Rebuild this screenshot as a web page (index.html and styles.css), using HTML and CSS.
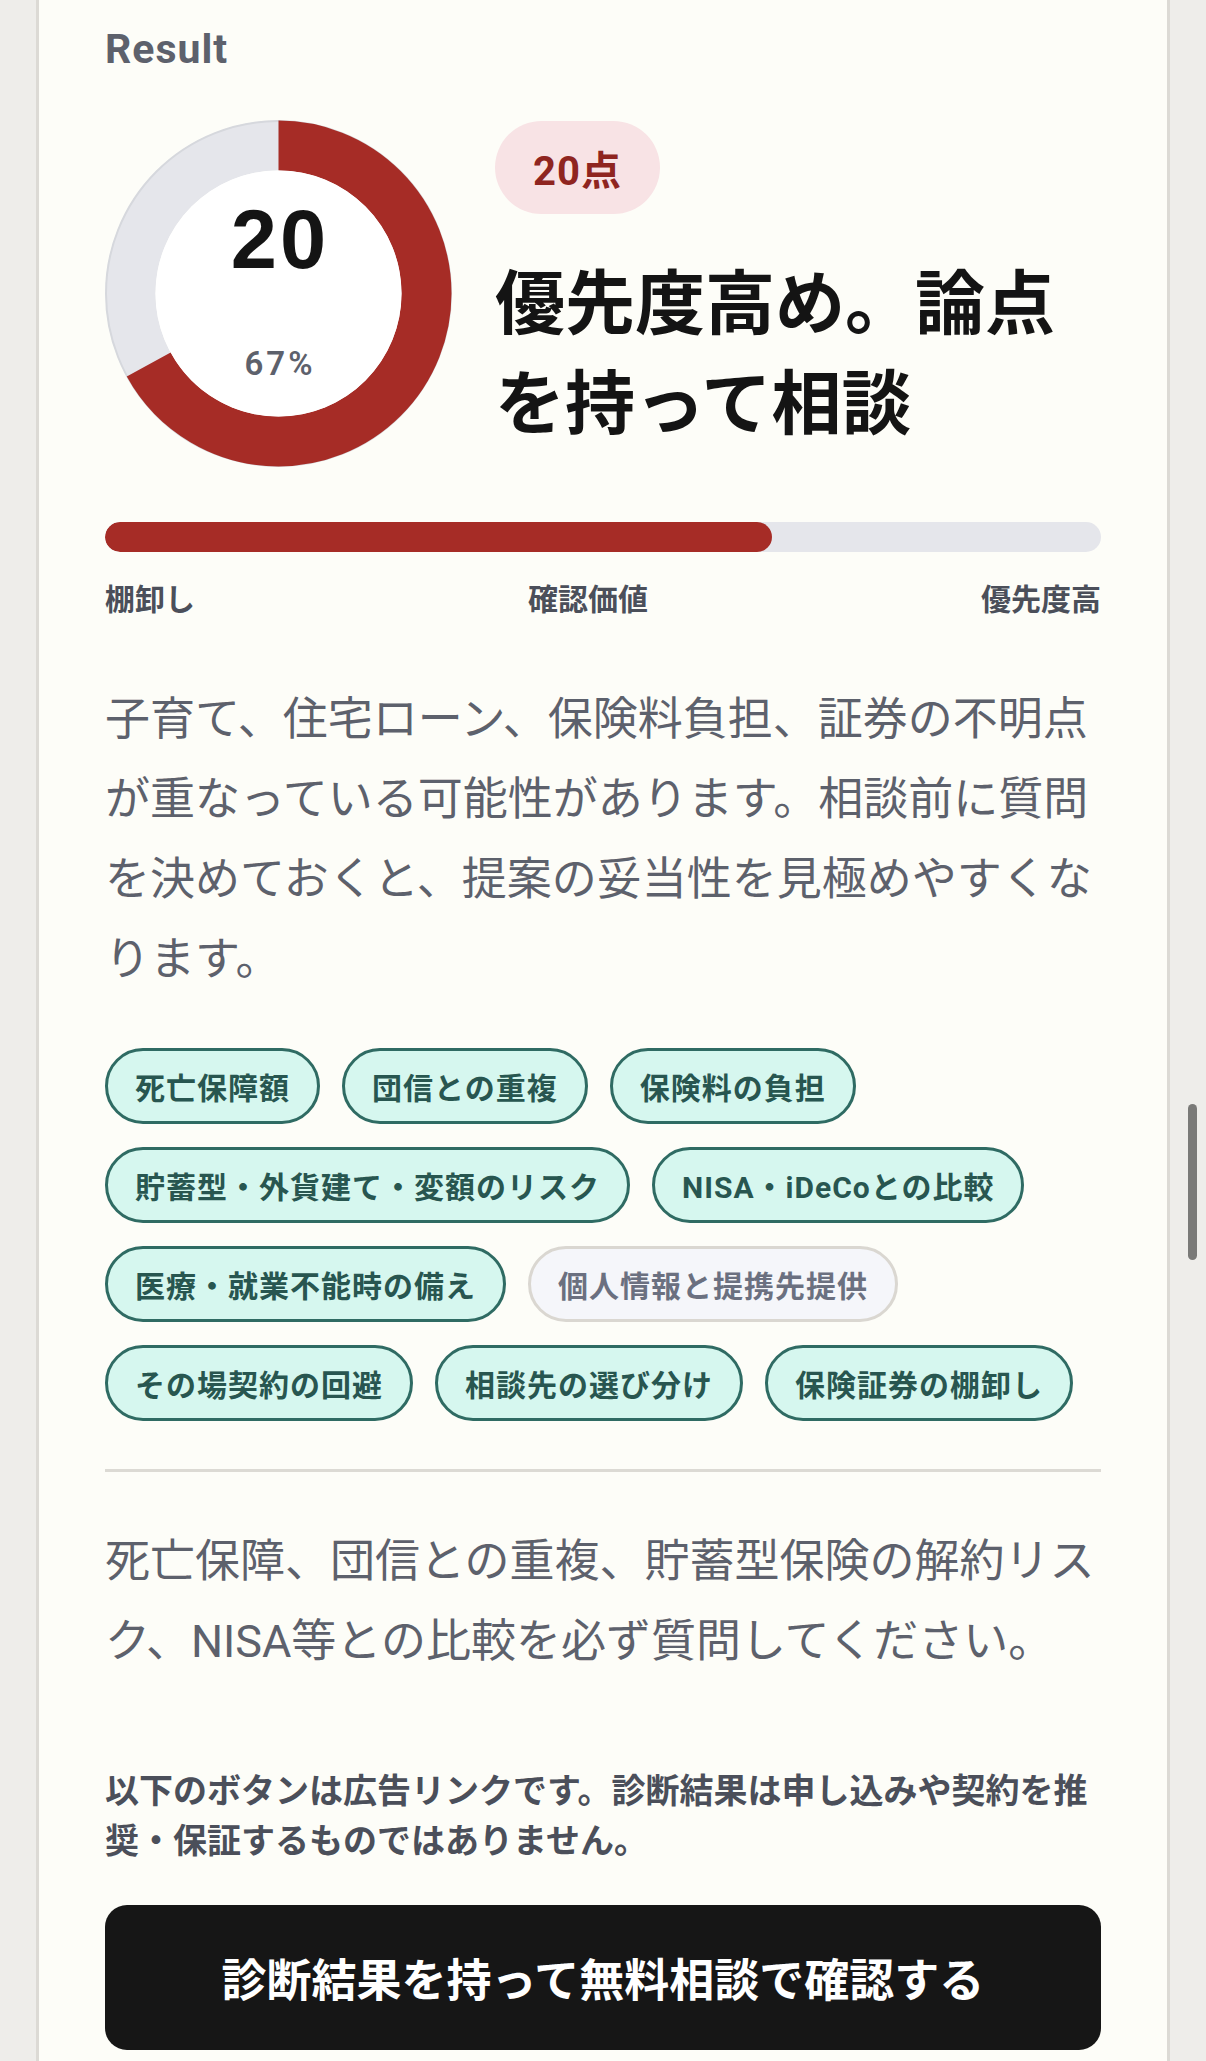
FILE: index.html
```html
<!DOCTYPE html>
<html lang="ja">
<head>
  <meta charset="UTF-8" />
  <meta name="viewport" content="width=device-width, initial-scale=1.0"/>
  <title>診断結果</title>
  <link rel="stylesheet" href="styles.css">
</head>
<body>

  <div class="page">
    <div class="card">
      <div class="result-label">Result</div>

      <!-- Score -->
      <div class="hero">
        <svg class="donut" width="347" height="347" viewBox="0 0 347 347">
          <circle cx="173.5" cy="173.5" r="148" fill="none" stroke="#e5e6eb" stroke-width="50"/>
          <circle cx="173.5" cy="173.5" r="172.5" fill="none" stroke="#d6d8dd" stroke-width="2"/>
          <circle cx="173.5" cy="173.5" r="148" fill="none" stroke="#a62c26" stroke-width="50"
                  stroke-dasharray="623 930" transform="rotate(-90 173.5 173.5)"/>
          <circle cx="173.5" cy="173.5" r="123" fill="#ffffff"/>
          <text class="donut-score" x="175" y="148" text-anchor="middle">20</text>
          <text class="donut-pct" x="175" y="255" text-anchor="middle">67%</text>
        </svg>

        <div class="hero-body">
          <span class="score-badge">20点</span>
          <h1 class="hero-title">優先度高め。論点を持って相談</h1>
        </div>
      </div>

      <div class="meter">
        <div class="meter-fill" style="width: 67%;"></div>
      </div>
      <div class="meter-labels">
        <span>棚卸し</span>
        <span>確認価値</span>
        <span>優先度高</span>
      </div>

      <p class="summary">子育て、住宅ローン、保険料負担、証券の不明点が重なっている可能性があります。相談前に質問を決めておくと、提案の妥当性を見極めやすくなります。</p>

      <!-- Topics -->
      <div class="tags">
        <span class="tag">死亡保障額</span>
        <span class="tag">団信との重複</span>
        <span class="tag">保険料の負担</span>
        <span class="tag">貯蓄型・外貨建て・変額のリスク</span>
        <span class="tag">NISA・iDeCoとの比較</span>
        <span class="tag">医療・就業不能時の備え</span>
        <span class="tag muted">個人情報と提携先提供</span>
        <span class="tag">その場契約の回避</span>
        <span class="tag">相談先の選び分け</span>
        <span class="tag">保険証券の棚卸し</span>
      </div>

      <hr class="divider">

      <p class="advice">死亡保障、団信との重複、貯蓄型保険の解約リスク、NISA等との比較を必ず質問してください。</p>

      <p class="ad-note">以下のボタンは広告リンクです。診断結果は申し込みや契約を推奨・保証するものではありません。</p>

      <a class="cta" href="#">診断結果を持って無料相談で確認する</a>
    </div>
  </div>

  <div class="scrollbar"></div>

</body>
</html>
```

FILE: styles.css
```css
html, body {
  overflow: hidden;
}

body {
  font-family: Roboto, "Noto Sans CJK JP", sans-serif;
  background: #eeedea;
  color: #141414;
  margin: 0;
  padding: 0;
}

.page {
  margin: 0 36px;
}

.card {
  background: #fdfdf8;
  border-left: 3px solid #dcdad5;
  border-right: 3px solid #dcdad5;
  padding: 29px 66px 12px;
  min-height: 100vh;
  box-sizing: border-box;
}

.result-label {
  font-size: 41px;
  line-height: 40px;
  font-weight: 700;
  letter-spacing: 1px;
  color: #5d616c;
  margin-bottom: 51px;
}

.hero {
  display: flex;
  align-items: flex-start;
  gap: 43px;
}

.donut {
  flex: none;
  display: block;
}

.donut-score {
  font-family: "Liberation Sans", Roboto, sans-serif;
  font-size: 83px;
  font-weight: 700;
  letter-spacing: 3px;
  fill: #141414;
}

.donut-pct {
  font-size: 33px;
  font-weight: 600;
  letter-spacing: 3px;
  fill: #5d616c;
}

.hero-body {
  flex: 1;
  padding-top: 1px;
}

.score-badge {
  display: inline-flex;
  align-items: center;
  height: 93px;
  padding: 0 38px;
  border-radius: 47px;
  background: #f8e3e5;
  color: #8f2520;
  font-size: 40px;
  font-weight: 700;
  letter-spacing: 1px;
}

.hero-title {
  margin: 41px 0 0;
  font-size: 70px;
  line-height: 100px;
  font-weight: 700;
  color: #141414;
}

.meter {
  margin-top: 55px;
  height: 30px;
  border-radius: 15px;
  background: #e5e6eb;
  overflow: hidden;
}

.meter-fill {
  height: 100%;
  background: #a62c26;
  border-radius: 15px;
}

.meter-labels {
  display: flex;
  justify-content: space-between;
  margin-top: 28px;
  font-size: 30px;
  line-height: 40px;
  font-weight: 700;
  color: #4b4f5a;
}

.summary,
.advice {
  font-size: 45px;
  line-height: 80px;
  color: #5d616c;
  margin: 60px 0 0;
}

.tags {
  display: flex;
  flex-wrap: wrap;
  gap: 23px 22px;
  margin-top: 48px;
}

.tag {
  display: inline-flex;
  align-items: center;
  height: 76px;
  box-sizing: border-box;
  padding: 0 27px;
  border: 3px solid #2f6b63;
  border-radius: 38px;
  background: #d6f7ef;
  color: #285650;
  font-size: 30px;
  font-weight: 700;
  letter-spacing: 1px;
}

.tag.muted {
  background: #f5f6fa;
  border-color: #dad7d1;
  color: #6b7080;
}

.divider {
  border: none;
  height: 3px;
  background: #dcdad4;
  margin: 48px 0 0;
}

.advice {
  margin-top: 50px;
}

.ad-note {
  margin: 84px 0 0;
  font-size: 34px;
  line-height: 50px;
  font-weight: 700;
  color: #4b4f5a;
}

.cta {
  display: flex;
  align-items: center;
  justify-content: center;
  height: 145px;
  margin-top: 39px;
  border-radius: 22px;
  background: #161616;
  color: #ffffff;
  font-size: 45px;
  font-weight: 700;
  text-decoration: none;
}

.scrollbar {
  position: fixed;
  top: 1104px;
  left: 1188px;
  width: 9px;
  height: 156px;
  border-radius: 5px;
  background: #7a7a78;
}
```
